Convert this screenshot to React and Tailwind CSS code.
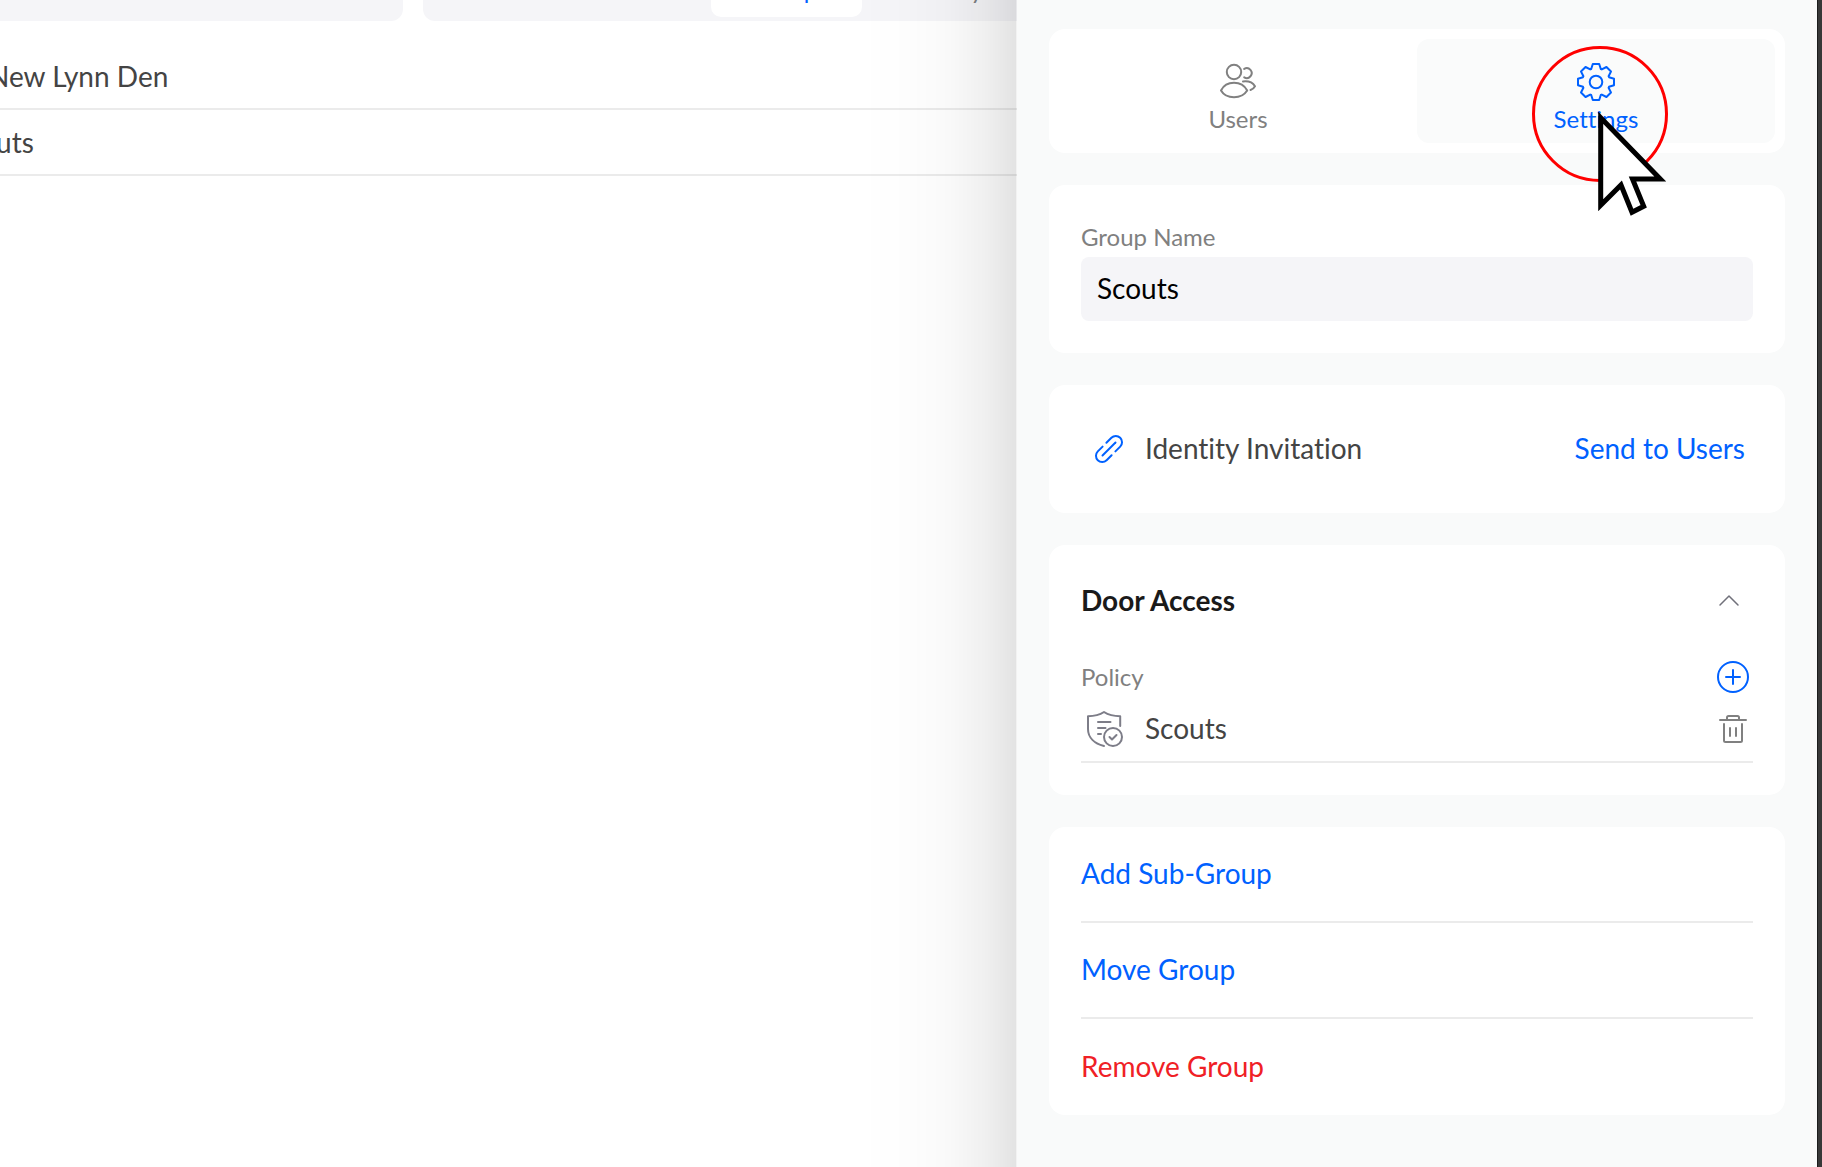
const TOOTH = [
  [-4.8, -13],
  [-3.2, -18],
  [3.2, -18],
  [4.8, -13],
];

const gearPoints = Array.from({ length: 8 })
  .flatMap((_, i) => {
    const a = (i * Math.PI) / 4;
    return TOOTH.map(([x, y]) => {
      const px = 20 + x * Math.cos(a) - y * Math.sin(a);
      const py = 19 + x * Math.sin(a) + y * Math.cos(a);
      return px.toFixed(2) + "," + py.toFixed(2);
    });
  })
  .join(" ");

function Svg({ size = 40, width = 2, children }) {
  return (
    <svg
      width={size}
      height={size}
      viewBox={`0 0 ${size} ${size}`}
      fill="none"
      stroke="currentColor"
      strokeWidth={width}
      strokeLinecap="round"
      strokeLinejoin="round"
      className="shrink-0"
      aria-hidden="true"
    >
      {children}
    </svg>
  );
}

function UsersIcon() {
  return (
    <Svg>
      <circle cx="16" cy="9" r="7.2" />
      <path d="M3 27.5C5.500 22.500 10.500 19.800 16 19.800S26.500 22.500 29.200 27.500C26.500 31.800 22 34.200 16 34.200S5.500 31.800 3 27.500Z" />
      <path d="M26.200 5.900A4.900 4.900 0 1 1 26.200 14.300" />
      <path d="M25 18.400C30.500 17.800 34.800 19.600 37 23.200C36 25 34.500 26.300 32.500 27" />
    </Svg>
  );
}

function GearIcon() {
  return (
    <Svg>
      <polygon points={gearPoints} />
      <circle cx="20" cy="19" r="6.300" />
    </Svg>
  );
}

function LinkIcon() {
  return (
    <Svg>
      <path d="M21.400 13.800L26.400 8.800A6.200 6.200 0 0 1 35.200 17.600L30.400 22.400" />
      <path d="M17.600 17.600L12.800 22.400A6.200 6.200 0 0 0 21.600 31.200L26.600 26.200" />
      <path d="M17.500 26.500L30.500 13.500" />
    </Svg>
  );
}

function PolicyIcon() {
  return (
    <Svg>
      <path d="M19 37C9.500 34.500 3 28.500 3 20V7.200C9 7.200 14.500 6 19 3C23.500 6 29.500 7.200 35.200 7.200V17" />
      <path d="M13 13H25.500M13 19H20.500M13 25H16" />
      <circle cx="28" cy="28" r="9" />
      <path d="M24.500 28L27 30.500L31.500 26" />
    </Svg>
  );
}

function ChevronIcon() {
  return (
    <Svg size={24} width={1.5}>
      <path d="M3 17L12 8L21 17" />
    </Svg>
  );
}

function PlusIcon() {
  return (
    <Svg size={32}>
      <circle cx="16" cy="16" r="15" />
      <path d="M16 9V23M9 16H23" />
    </Svg>
  );
}

function TrashIcon() {
  return (
    <Svg size={32}>
      <path d="M3 7H29M10 6.500V4.500Q10 3 11.500 3H20.500Q22 3 22 4.500V6.500" />
      <path d="M7 11V27.500Q7 29 8.500 29H23.500Q25 29 25 27.500V11" />
      <path d="M13 15V23M19 15V23" />
    </Svg>
  );
}

function Pointer() {
  return (
    <svg
      width="70"
      height="106"
      viewBox="0 0 70 106"
      className="absolute left-1/2 top-[72px] ml-0.5"
      fill="#ffffff"
      stroke="#000000"
      strokeWidth="5"
      strokeMiterlimit="10"
      aria-hidden="true"
    >
      <path d="M2.700 6.700L62.300 68H34.500L45.700 95.300L34 101.300L23 74L2.700 94.300Z" />
    </svg>
  );
}

const card = "rounded-2xl bg-white";

function GroupList() {
  return (
    <main className="min-w-0 flex-1 overflow-hidden">
      <div className="flex gap-5">
        <div className="h-[21px] w-[403px] shrink-0 rounded-br-xl bg-[#f5f5f8]" />
        <div className="flex h-[21px] flex-1 justify-end rounded-bl-xl bg-[#f5f5f8] text-2xl leading-8">
          <button className="flex h-[17px] w-[151px] items-end justify-center rounded-b-[10px] bg-white pb-[11px] pl-1.5 text-[#0061ff]">
            Groups
          </button>
          <button className="flex h-[17px] w-[155px] items-end justify-center pb-[11px] pl-6 text-[#7d7e82]">
            Policy
          </button>
        </div>
      </div>
      <ul className="mt-[23px] text-[28px] leading-9 text-[#444444]">
        <li className="flex h-[66px] items-center border-b-2 border-[#ebebeb]">
          <span className="-ml-3">New Lynn Den</span>
        </li>
        <li className="flex h-[66px] items-center border-b-2 border-[#ebebeb]">
          <span className="-ml-12">Scouts</span>
        </li>
      </ul>
    </main>
  );
}

function Tabs() {
  const tab = "relative flex h-[104px] flex-1 flex-col items-center rounded-xl pt-6";
  return (
    <div className={card + " flex p-2.5"}>
      <button className={tab + " text-[#808080]"}>
        <UsersIcon />
        <span className="text-2xl leading-8">Users</span>
      </button>
      <button className={tab + " bg-[#fafbfb] text-[#0061ff]"}>
        <GearIcon />
        <span className="text-2xl leading-8">Settings</span>
        <span className="pointer-events-none absolute left-1/2 top-[7px] -ml-16 size-[136px] rounded-full border-3 border-[#ff0000]" />
        <Pointer />
      </button>
    </div>
  );
}

function Drawer() {
  const action = "flex h-24 w-full items-center pb-0.5 text-left";
  return (
    <aside className="relative flex w-[800px] max-w-full flex-col gap-8 bg-[#f9fafa] px-8 pt-[29px] text-[28px] leading-9">
      <div className="pointer-events-none absolute inset-y-0 right-full w-40 border-r border-black/5 bg-[linear-gradient(to_left,rgba(0,0,0,0.11)_0%,rgba(0,0,0,0.06)_20%,rgba(0,0,0,0.025)_42%,rgba(0,0,0,0.008)_65%,rgba(0,0,0,0)_100%)]" />
      <Tabs />

      <section className={card + " px-8 pb-8 pt-8"}>
        <label htmlFor="group-name" className="block text-2xl leading-10 text-[#808080]">
          Group Name
        </label>
        <input
          id="group-name"
          defaultValue="Scouts"
          className="block h-16 w-full rounded-lg bg-[#f5f5f8] px-4 pb-0.5 text-black outline-none"
        />
      </section>

      <section className={card + " flex h-32 items-center pl-9 pr-10"}>
        <span className="text-[#0061ff]">
          <LinkIcon />
        </span>
        <span className="ml-5 flex-1 pb-0.5 text-[#444444]">Identity Invitation</span>
        <button className="pb-0.5 text-[#0061ff]">Send to Users</button>
      </section>

      <section className={card + " px-8 pb-8 pt-6"}>
        <div className="flex h-16 items-center justify-between pb-0.5 pr-3">
          <h2 className="font-bold text-[#1a1a1a]">Door Access</h2>
          <button aria-label="Collapse" className="text-[#70707a]">
            <ChevronIcon />
          </button>
        </div>
        <div className="mt-6 flex h-10 items-center justify-between pr-1">
          <h3 className="text-2xl text-[#808080]">Policy</h3>
          <button aria-label="Add policy" className="text-[#0061ff]">
            <PlusIcon />
          </button>
        </div>
        <div className="flex h-[66px] items-center border-b-2 border-[#ebebeb] pl-1 pr-1">
          <span className="text-[#7d7d88]">
            <PolicyIcon />
          </span>
          <span className="ml-5 flex-1 pb-0.5 text-[#444444]">Scouts</span>
          <button aria-label="Delete policy" className="text-[#808080]">
            <TrashIcon />
          </button>
        </div>
      </section>

      <section className={card + " px-8"}>
        <button className={action + " border-b-2 border-[#ebebeb] text-[#0061ff]"}>Add Sub-Group</button>
        <button className={action + " border-b-2 border-[#ebebeb] text-[#0061ff]"}>Move Group</button>
        <button className={action + " text-[#f02025]"}>Remove Group</button>
      </section>
    </aside>
  );
}

export default function App() {
  return (
    <div className="flex min-h-screen overflow-hidden bg-white font-['Lato',sans-serif] [font-variant-ligatures:none]">
      <GroupList />
      <Drawer />
      <div className="relative w-[5px] shrink-0 border-l border-[#1c1c1c] bg-[#383838]" />
    </div>
  );
}
